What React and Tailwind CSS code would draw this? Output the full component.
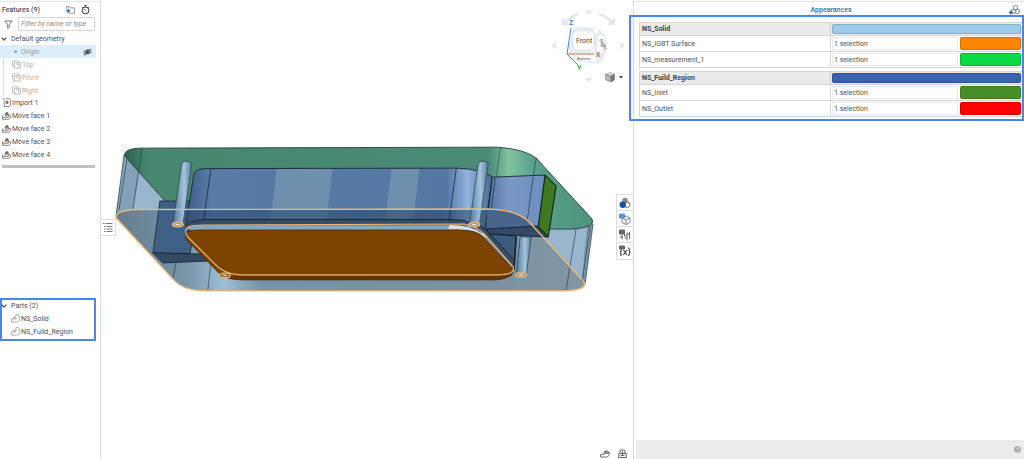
import React from "react";

function FaceIcon({ kind }) {
  return (
    <svg viewBox="0 0 10 10" className="size-[9px] shrink-0" fill="none" stroke="currentColor" strokeWidth=".9" aria-hidden="true">
      {kind === "import" && (
        <>
          <path d="M.3 1h2.500M2.500 2.500v7h5.500l1.500-1.500V2L8 .8H4" />
          <path d="M4 3l2.500 2.500M6.500 3.200v2.500H4" strokeWidth="1.200" />
        </>
      )}
      {kind === "move" && (
        <>
          <path d="M.6 5v4.200h7L9.400 7.700V5H7v2H.6M3 5.200h3.300" />
          <path d="M3.200 3.800L5.500 1.200 7.500 3.800z" fill="currentColor" />
        </>
      )}
      {kind === "plane" && <path d="M.6 1v6l2 2h6.700V3L7 1zM2.600 9V3h6.700M4.500 4.500h3v3" />}
      {kind === "part" && <path d="M.6 5.500V9h6.500l2.200-1.700V2L7.800.6H5.500v4.900H.6M2.800 5.500V3.500h2.700" />}
    </svg>
  );
}

function Chevron() {
  return (
    <svg viewBox="0 0 6 6" className="size-[6px] shrink-0" fill="none" stroke="#444" strokeWidth="1.1" aria-hidden="true">
      <path d="M.7 1.7L3 4.2l2.3-2.5" />
    </svg>
  );
}

const planes = ["Top", "Front", "Right"];
const steps = [
  ["Import 1", "import"],
  ["Move face 1", "move"],
  ["Move face 2", "move"],
  ["Move face 3", "move"],
  ["Move face 4", "move"],
];

function FeatureTree() {
  return (
    <aside className="w-[101px] shrink-0 border-r border-[#d9d9d9] pt-px">
      <section className="h-[297px] border-t border-[#e4e4e4] pt-[2px]">
        <header className="flex h-[12px] items-center pl-[2px] pr-[10px]">
          <h2 className="flex-1 text-[7px] font-medium leading-[12px]">Features (9)</h2>
          <button aria-label="New folder" className="mr-[6px]">
            <svg viewBox="0 0 10 9" className="h-[8px] w-[9px]" fill="none" stroke="#888">
              <path d="M.5 3V.8h3l1 1.300h5v6h-6" />
              <path d="M.2 5.500h4.600M2.500 3.200v4.600" stroke="#1b5faa" strokeWidth="1.300" />
            </svg>
          </button>
          <button aria-label="Rollback timer">
            <svg viewBox="0 0 10 11" className="h-[10px] w-[9px]" fill="none" stroke="#333" strokeWidth="1.1">
              <circle cx="5" cy="6" r="3.8" />
              <path d="M3.800.7h2.400M5 .7v1.500M1 2l1 1M9 2L8 3M5 6L3.700 4.500" />
            </svg>
          </button>
        </header>
        <div className="flex h-[16px] items-center gap-[5px] pl-[4px] pr-[5px]">
          <svg viewBox="0 0 9 9" className="size-[9px] shrink-0" fill="none" stroke="#777" aria-hidden="true">
            <path d="M.8 1h7.400L5.300 4.500v2.800L3.700 8.400V4.500z" />
          </svg>
          <input
            aria-label="Filter features"
            placeholder="Filter by name or type"
            className="h-[14px] w-full min-w-0 border border-[#d6d6d6] px-[2px] text-[7px] italic leading-[12px] placeholder:text-[#8a8a8a]"
          />
        </div>
        <div className="flex h-[13px] items-center gap-[4px] pl-[1px]">
          <Chevron />
          <span>Default geometry</span>
        </div>
        <ul className="mr-[4px] text-[#b0b0b0]">
          <li className="flex h-[13px] items-center bg-[#dceefb] pl-[14px] pr-[4px]">
            <span className="mr-[4px] size-[3px] rounded-full bg-[#8fa6b5]" />
            <span className="flex-1 text-[#8e9ba5]">Origin</span>
            <button aria-label="Toggle origin visibility">
              <svg viewBox="0 0 10 8" className="h-[8px] w-[9px]" fill="none" stroke="#444">
                <path d="M.6 4Q5-.5 9.400 4Q5 8 .6 4z" />
                <circle cx="5" cy="4" r="1.600" fill="#444" />
                <path d="M1.500 7.500L8.500.5" strokeWidth="1.200" />
              </svg>
            </button>
          </li>
          {planes.map((name) => (
            <li key={name} className="ml-[3px] flex h-[13px] items-center gap-[1px] border-l border-[#dedede] pl-[8px]">
              <FaceIcon kind="plane" />
              <span>{name}</span>
            </li>
          ))}
        </ul>
        <ul className="-mt-px">
          {steps.map(([name, kind]) => (
            <li key={name} className="flex h-[13px] items-center gap-[1px] pl-[2px] text-[#6a6a6a]">
              <FaceIcon kind={kind} />
              <span className="text-[#505050]">{name}</span>
            </li>
          ))}
        </ul>
        <div className="ml-[2px] mr-[5px] mt-[4px] h-[3px] bg-[#c2c2c2]" />
      </section>
      <section className="mr-[4px] border-2 border-[#4a86e8]">
        <h2 className="-ml-px flex h-[12px] items-center gap-[4px]">
          <Chevron />
          Parts (2)
        </h2>
        <ul className="pb-px text-[#999]">
          {["NS_Solid", "NS_Fuild_Region"].map((name) => (
            <li key={name} className="flex h-[13px] items-center gap-[1px] pl-[9px]">
              <FaceIcon kind="part" />
              <span className="text-[#505050]">{name}</span>
            </li>
          ))}
        </ul>
      </section>
    </aside>
  );
}

function Model() {
  return (
    <svg viewBox="101 0 533 459" className="absolute inset-0 size-full" fill="none" strokeLinejoin="round" role="img" aria-label="Housing with fluid region">
      <defs>
        <linearGradient id="steel" x1="0" x2="1">
          <stop offset="0" stopColor="#54799b" />
          <stop offset=".6" stopColor="#a5c5dd" />
          <stop offset="1" stopColor="#54789c" />
        </linearGradient>
        <linearGradient id="body" x1="186" x2="493" y1="0" y2="0" gradientUnits="userSpaceOnUse">
          <stop offset="0" stopColor="#3c5d86" />
          <stop offset=".08" stopColor="#587aa7" />
          <stop offset=".85" stopColor="#5577a4" />
          <stop offset=".92" stopColor="#91b3df" />
          <stop offset="1" stopColor="#49688f" />
        </linearGradient>
        <linearGradient id="floor" x1="116" x2="587" y1="0" y2="0" gradientUnits="userSpaceOnUse">
          <stop offset="0" stopColor="#647c8e" />
          <stop offset=".15" stopColor="#7895a8" />
          <stop offset=".23" stopColor="#9bbdd5" />
          <stop offset=".31" stopColor="#7594a9" />
          <stop offset=".8" stopColor="#7892a2" />
          <stop offset="1" stopColor="#8296a3" />
        </linearGradient>
        <linearGradient id="lid" x1="124" x2="594" y1="0" y2="0" gradientUnits="userSpaceOnUse">
          <stop offset="0" stopColor="#27614e" />
          <stop offset=".05" stopColor="#47876f" />
          <stop offset=".78" stopColor="#4c8b78" />
          <stop offset=".82" stopColor="#82c39d" />
          <stop offset=".87" stopColor="#5aa18d" />
          <stop offset="1" stopColor="#4e927f" />
        </linearGradient>
        <linearGradient id="duct" x1="493" x2="546" y1="0" y2="0" gradientUnits="userSpaceOnUse">
          <stop offset="0" stopColor="#597caa" />
          <stop offset=".3" stopColor="#7c98c5" />
          <stop offset="1" stopColor="#698fbf" />
        </linearGradient>
      </defs>

      <path d="M124 155L116 216L173 279Q183 291 206 291H565Q585 291 586 284L594 223L573 229H180V201H165z" fill="#98b6cb" />
      <path d="M124 155L116 216Q118 210 133 209L140 171z" fill="#84a2b7" />
      <path d="M588 227L582 287Q586 286 586 284L594 223z" fill="#7795aa" />
      <path d="M124 155Q126 148 140 148L498 147Q526 149 537 158L593 219Q597 227 575 229H190L165 201z" fill="url(#lid)" stroke="#263f3b" strokeWidth=".9" />
      <path d="M116 217Q115 210 138 209.500L490 209Q518 210 530 222L584 281Q591 290 565 291H206Q183 291 173 279z" fill="url(#floor)" />
      <path d="M124 155L116 216M127 159L119 210M142 148L133 209M176 263L173 279M211 264L208 290M594 224L586 284M591 226L583 282M577 229L567 290M537 158L534 177" stroke="#30424c" strokeWidth=".7" />

      <path d="M160 201H200L190 254L153 253z" fill="#405f86" stroke="#17232f" strokeWidth=".8" />
      <path d="M153 253L206 254L210 261L163 263z" fill="#314a66" stroke="#17232f" strokeWidth=".8" />
      <path d="M490 234L517 236L515 270z" fill="#3d5b7d" stroke="#1a2936" />
      <path d="M517 237L515 264" stroke="#13202b" strokeWidth="1.500" />

      <path d="M194 174Q196 168 208 168.500L457 168Q483 169 493 177L486 229H190L186 225z" fill="url(#body)" stroke="#172637" strokeWidth=".9" />
      <path d="M277 169H333L327 219H271zM392 169H420L414 219H386z" fill="#6f90ac" />
      <path d="M188 210H490L486 229L470 220H204L186 228z" fill="#30496a" fillOpacity=".6" />
      <path d="M211 169L204 219M457 168L450 219M493 178L486 228" stroke="#172637" strokeWidth=".8" />
      <path d="M186 230Q186 220 204 219.500H454Q475 220 486 229L515 260L514 270L470 225H198z" fill="#344d68" stroke="#101e2c" strokeWidth=".8" />

      <path d="M493 177L546 175L540 227L487 229z" fill="url(#duct)" stroke="#17283b" strokeWidth=".9" />
      <path d="M496 178L490 225" stroke="#26384e" strokeWidth=".8" />
      <path d="M488 209Q514 210 530 221L533 227L487 229z" fill="#49658c" />
      <path d="M487 229L540 226L549 237L490 234z" fill="#334b69" stroke="#111d2a" strokeWidth=".9" />
      <path d="M546 175L557 186L549 237L539 227z" fill="#3d7923" stroke="#142b10" strokeWidth="1.200" />
      <path d="M534 176L528 221" stroke="#26384e" strokeWidth=".7" />
      <path d="M501 148L497 178" stroke="#315b51" strokeWidth=".7" />

      <path d="M186 229Q189 225 202 225H452Q472 225 484 234L514 267L510 270L474 232H198z" fill="#82a8c4" stroke="#2f4657" strokeWidth=".6" />
      <path d="M450 225Q472 225 484 234L488 238L481 235Q470 229 449 229z" fill="#d2e0e9" />
      <path d="M186 232Q190 230 200 230H460Q476 230 483 236L513 268Q517 277 497 280H242Q227 280 219 273L186 239z" fill="#7d4300" stroke="#492800" strokeWidth=".8" />
      <path d="M237 276H500Q511 275 514 270Q515 278 500 280H242Q232 280 227 277z" fill="#633300" />

      <g stroke="#2a3b49" strokeWidth=".7">
        <path d="M182 163Q187 159 192 163L183 225H173z" fill="url(#steel)" />
        <path d="M479 163Q484 159 489 163L480 225H470z" fill="url(#steel)" />
        <path d="M521 237H532L527 275H517z" fill="url(#steel)" />
      </g>

      <g stroke="#edb678" strokeWidth="1.200">
        <path d="M116 218Q115 210 138 209.500L490 209Q518 210 530 222L584 281Q591 290 565 291H206Q183 291 173 279z" strokeWidth="1.400" />
        <path d="M186 232Q184 225 202 225L465 224Q478 227 485 234L514 267Q516 275 499 275H240Q223 274 214 263L188 237Q186 235 186 232z" />
        <ellipse cx="178" cy="224.500" rx="5.500" ry="2.300" fill="#a89c90" />
        <ellipse cx="475" cy="224.500" rx="5.500" ry="2.300" fill="#a89c90" />
        <ellipse cx="522" cy="275" rx="5.500" ry="2.300" fill="#a89c90" />
        <ellipse cx="225" cy="275.500" rx="5.500" ry="2.300" fill="#8b642f" />
      </g>
      <g stroke="#eef0f0" strokeWidth="1">
        <path d="M176 224.500h4M473 224.500h4M520 275h4M223 275.500h4" />
      </g>
    </svg>
  );
}

function ViewCube() {
  return (
    <svg viewBox="548 4 84 82" className="absolute right-[2px] top-[4px] h-[82px] w-[84px]" fill="none" role="img" aria-label="View cube">
      <g fill="#e2e8ec">
        <path d="M585.500 13.500L589.500 9l4 4.500zM585.500 78L589.500 82.500l4-4.500zM557 41.500L552.500 45.500l4.500 4zM621.500 41.500L626 45.500l-4.500 4z" />
        <path d="M579 13Q571 15 566 20L563 18V25H570L568 22Q573 17 580 15zM600 13Q608 15 613 20L616 18V25H609L611 22Q606 17 599 15z" />
      </g>
      <path d="M574 28Q580 26 597 28Q607 32 608 41Q607 56 602 62Q595 65 579 61L569 53z" fill="#e6edf1" />
      <rect x="574" y="31" width="21" height="19" rx="4" fill="#fff" stroke="#d3dee4" strokeWidth=".7" />
      <path d="M599 36Q607 34 606 42L604 51Q601 57 598 50zM576 55H594Q599 56 598 61Q584 62 577 58z" fill="#fff" />
      <circle cx="597" cy="31" r="2.500" fill="#fff" />
      <circle cx="594" cy="52" r="2" fill="#fff" />
      <path d="M572 28L568 54" stroke="#477ee6" />
      <path d="M568 54H595" stroke="#d77b68" />
      <path d="M568 54L579 65" stroke="#4a9a60" />
      <g fontSize="7">
        <text x="577" y="43" fill="#444">Front</text>
        <text x="570" y="25" fill="#397de9" fontWeight="700">Z</text>
        <text x="597" y="57" fill="#c97355" fontWeight="700">X</text>
        <text x="578" y="70" fill="#3b9a52" fontWeight="700">Y</text>
        <text fontSize="5" transform="translate(600 40) rotate(62)" fill="#555">Right</text>
        <text x="578" y="60" fontSize="4" fill="#555">Bottom</text>
      </g>
    </svg>
  );
}

const panelTabs = ["Appearance panel", "Configuration panel", "Configured features", "Variable table"];

function PanelTabIcon({ index }) {
  return (
    <svg viewBox="0 0 12 12" className="size-[12px]" fill="none" stroke="#666" aria-hidden="true">
      {index === 0 && (
        <>
          <circle cx="6" cy="3.500" r="2.800" fill="#888" stroke="none" />
          <circle cx="8.300" cy="7.800" r="2.700" fill="#fff" />
          <circle cx="3.800" cy="7.800" r="3.200" fill="#164fad" stroke="none" />
        </>
      )}
      {index === 1 && (
        <>
          <path d="M3 4.500L7 3l4 2v4.500l-4 2-4-2zM3 5l4 2 4-2M7 7v4.500" stroke="#7d8b94" />
          <path d="M.5 1h5v4h-5z" fill="#5295ed" stroke="#3979c9" strokeWidth=".6" />
        </>
      )}
      {index === 2 && (
        <>
          <path d="M.5 1h5v4h-5z" fill="#5c686d" />
          <path d="M3 6v4.500M1 8h3M5.500 4v3h2M5.500 9h2M8 3.500v8M8 5h2.500v5M10.500 3v2" />
        </>
      )}
      {index === 3 && (
        <>
          <path d="M.5 1h5v3h-5z" fill="#5c686d" />
          <path d="M2.500 4.500Q.8 8 2.500 11M9.500 2.500Q12 6.500 9.500 11M4.500 5l3.500 5M8.200 5L4.200 10" stroke="#444" strokeWidth="1.200" />
        </>
      )}
    </svg>
  );
}

function Viewport() {
  return (
    <main className="relative min-w-0 flex-1">
      <Model />
      <ViewCube />
      <button aria-label="Display style" className="absolute right-[10px] top-[72px] flex items-center gap-[4px]">
        <svg viewBox="0 0 10 11" className="h-[11px] w-[10px]" stroke="#777" strokeWidth=".6">
          <path d="M.5 2.500L5 .6l4.500 1.600L6 4z" fill="#e4e4e4" />
          <path d="M.5 2.500L6 4v6L.8 8z" fill="#b8b8b8" />
          <path d="M6 4l3.500-1.800V8L6 10z" fill="#777" />
        </svg>
        <svg viewBox="0 0 4 3" className="h-[3px] w-[4px]" fill="#444"><path d="M0 0h4L2 2.500z" /></svg>
      </button>
      <button aria-label="Feature list" className="absolute left-0 top-[219px] flex h-[17px] w-[15px] items-center justify-center border border-l-0 border-[#ddd] bg-white">
        <svg viewBox="0 0 10 9" className="h-[9px] w-[10px]" stroke="#777">
          <path d="M0 .5h1.500M2.500 .5H9.500M1 3.500h1.500M3.500 3.500h6M1 6h1.500M3.500 6h6M1 8.500h1.500M3.500 8.500h6" />
        </svg>
      </button>
      <nav aria-label="Panels" className="absolute right-0 top-[194px] flex w-[17px] flex-col border border-r-0 border-[#ddd] bg-white">
        {panelTabs.map((name, i) => (
          <button key={name} aria-label={name} className="flex h-[16px] items-center justify-center border-b border-[#ddd] last:border-b-0">
            <PanelTabIcon index={i} />
          </button>
        ))}
      </nav>
      <div className="absolute bottom-[1px] right-[6px] flex items-center gap-[8px]">
        <button aria-label="Measure">
          <svg viewBox="0 0 10 9" className="h-[9px] w-[10px]" fill="none" stroke="#777">
            <path d="M.5 5.500v2.500H7Q9.500 7 9.500 4Q8 1 5 2Q3.500 3 4 5.500zM4 4h5" />
            <path d="M4.500 3Q7 1 9 4L5 4.500z" fill="#999" />
          </svg>
        </button>
        <button aria-label="Mass properties">
          <svg viewBox="0 0 9 9" className="h-[9px] w-[9px]" fill="none" stroke="#666">
            <path d="M2 4V1.500Q4.500 0 7 1.500V4M.7 4.500h7.600v4H.7zM2.500 6.500h4M4.500 2v4" />
          </svg>
        </button>
      </div>
    </main>
  );
}

const groups = [
  {
    name: "NS_Solid",
    swatch: "bg-[#9bcbea]",
    faces: [
      ["NS_IGBT Surface", "bg-[#fb8500]"],
      ["NS_measurement_1", "bg-[#09d943]"],
    ],
  },
  {
    name: "NS_Fuild_Region",
    swatch: "bg-[#3b62b3]",
    faces: [
      ["NS_Inlet", "bg-[#478d29]"],
      ["NS_Outlet", "bg-[#ff0000]"],
    ],
  },
];

function AppearanceTable({ group }) {
  return (
    <table className="w-full table-fixed border-separate border-spacing-0 border-l border-t border-[#d6d6d6] text-left">
      <thead>
        <tr className="h-[13px] bg-[#eaeaea]">
          <th scope="col" className="border-b border-r border-[#d6d6d6] p-0 pl-[2px] font-bold text-[#444]">{group.name}</th>
          <th scope="col" className="border-b border-[#d6d6d6] p-0 pl-px pr-px">
            <button aria-label={group.name + " colour"} className={"block h-[10px] w-full rounded-[2px] border border-black/15 " + group.swatch} />
          </th>
        </tr>
      </thead>
      <tbody>
        {group.faces.map(([name, color]) => (
          <tr key={name} className="h-[16px]">
            <td className="border-b border-r border-[#d6d6d6] p-0 pl-[2px]">{name}</td>
            <td className="border-b border-[#d6d6d6] p-0 pl-px pr-px">
              <div className="flex items-center gap-[2px]">
                <input aria-label={name + " selection"} readOnly value="1 selection" className="h-[13px] min-w-0 flex-1 border border-[#e9e9e9] px-px leading-[11px]" />
                <button aria-label={name + " colour"} className={"h-[13px] w-[61px] rounded-[2px] border border-black/15 " + color} />
              </div>
            </td>
          </tr>
        ))}
      </tbody>
    </table>
  );
}

function AppearancePanel() {
  return (
    <aside className="flex w-[391px] shrink-0 flex-col border-l border-[#d9d9d9] pt-px">
      <header className="flex h-[14px] items-center border-t border-[#e4e4e4] pl-[19px] pr-[4px]">
        <h2 className="flex-1 pt-[3px] text-center font-medium leading-[12px] text-[#2f6db3]">Appearances</h2>
        <button aria-label="Add appearance" className="pt-[2px]">
          <svg viewBox="0 0 11 10" className="h-[10px] w-[11px]" fill="none" stroke="#888">
            <circle cx="6.500" cy="2.800" r="2.300" />
            <circle cx="8.300" cy="6.300" r="2.300" />
            <circle cx="4.700" cy="6.300" r="2.300" />
            <path d="M0 7.500h4M2 5.500v4" stroke="#1b5faa" strokeWidth="1.300" />
          </svg>
        </button>
      </header>
      <div className="relative -ml-[5px] flex flex-col gap-[3px] border-2 border-[#4a86e8] pb-[2px] pl-[8px] pt-[5px]">
        {groups.map((group) => (
          <AppearanceTable key={group.name} group={group} />
        ))}
      </div>
      <footer className="ml-[2px] mt-auto flex h-[19px] items-center justify-end bg-[#ebebeb] pr-[3px]">
        <button aria-label="Help">
          <svg viewBox="0 0 8 8" className="size-[7px]">
            <circle cx="4" cy="4" r="3.800" fill="#a6a6a6" />
            <path d="M2.800 3Q3 1.800 4.200 1.900Q5.500 2.300 5 3.400L4.100 4.200V5M4.100 5.700V6.500" fill="none" stroke="#fff" strokeWidth=".9" />
          </svg>
        </button>
      </footer>
    </aside>
  );
}

export default function App() {
  return (
    <div className="flex min-h-screen bg-white font-['Roboto','Liberation_Sans',sans-serif] text-[7px] leading-[10px] text-[#505050]">
      <FeatureTree />
      <Viewport />
      <AppearancePanel />
    </div>
  );
}
